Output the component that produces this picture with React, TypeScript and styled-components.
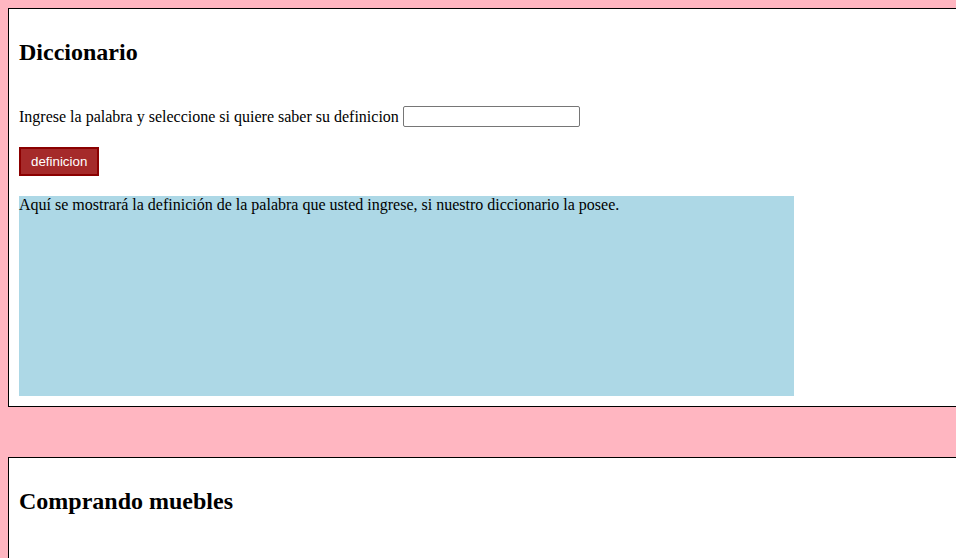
import React from "react";
import styled, { createGlobalStyle } from "styled-components";

const GlobalStyle = createGlobalStyle`
  html {
    overflow: hidden;
  }
  body {
    margin: 8px 0 8px 8px;
    background: #ffb6c1;
    font-family: "Liberation Serif", "Times New Roman", serif;
    font-size: 16px;
    color: #000;
  }
`;

const Card = styled.section`
  box-sizing: content-box;
  display: flex;
  flex-direction: column;
  align-items: flex-start;
  width: calc(100% + 10px);
  padding: 10px;
  border: 1px solid #000;
  background: #fff;
  margin-bottom: 50px;
`;

const Title = styled.h2`
  margin: 20px 0 40px;
  font-size: 24px;
  font-weight: bold;
  line-height: normal;
`;

const Row = styled.div`
  display: flex;
  align-items: center;
  gap: 4px;
  height: 21px;
  line-height: normal;
`;

const WordInput = styled.input`
  box-sizing: border-box;
  width: 177px;
  height: 21px;
  padding: 1px 2px;
  border: 1px solid #767676;
  border-radius: 2px;
  font-family: "Liberation Sans", Arial, sans-serif;
  font-size: 13.33px;
  background: #fff;
  outline: none;
`;

const ActionButton = styled.button`
  margin-top: 20px;
  padding: 5px 10px;
  border: 2px solid #8b0000;
  background: #a52a2a;
  color: #fff;
  font-family: "Liberation Sans", Arial, sans-serif;
  font-size: 13.33px;
  line-height: normal;
  cursor: pointer;
`;

const Output = styled.div`
  margin-top: 20px;
  width: 775px;
  height: 200px;
  background: #add8e6;
  line-height: normal;
`;

const Spacer = styled.div`
  height: 200px;
`;

export default function App() {
  return (
    <>
      <GlobalStyle />
      <Card>
        <Title>Diccionario</Title>
        <Row>
          <span>Ingrese la palabra y seleccione si quiere saber su definicion</span>
          <WordInput type="text" />
        </Row>
        <ActionButton type="button">definicion</ActionButton>
        <Output>
          Aquí se mostrará la definición de la palabra que usted ingrese, si nuestro diccionario la posee.
        </Output>
      </Card>
      <Card>
        <Title>Comprando muebles</Title>
        <Spacer />
      </Card>
    </>
  );
}
